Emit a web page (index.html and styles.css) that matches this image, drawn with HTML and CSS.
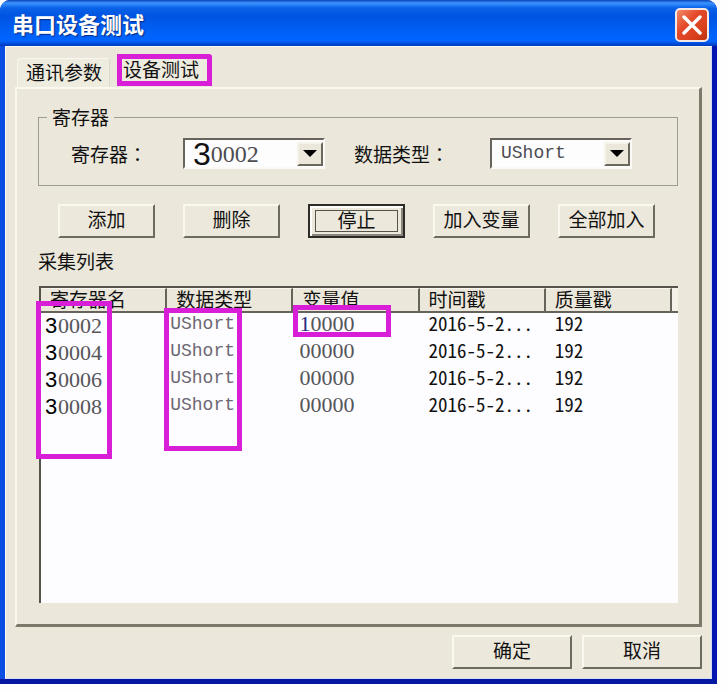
FILE: index.html
```html
<!DOCTYPE html>
<html lang="zh-CN">
<head>
  <meta charset="UTF-8" />
  <meta name="viewport" content="width=device-width, initial-scale=1.0"/>
  <title>串口设备测试</title>
  <link rel="stylesheet" href="styles.css">
</head>
<body>
  <div class="window">
    <div class="titlebar">
      <h1>串口设备测试</h1>
      <button class="close-btn" type="button" aria-label="关闭">
        <svg width="20" height="20" viewBox="0 0 20 20"><path d="M2 2 L18 18 M18 2 L2 18" stroke="#fff" stroke-width="3.4" stroke-linecap="round"/></svg>
      </button>
    </div>

    <div class="client">
      <div class="tabs">
        <button class="tab" type="button">通讯参数</button>
        <button class="tab active" type="button">设备测试</button>
      </div>

      <div class="panel">
        <fieldset class="group">
          <legend>寄存器</legend>
          <div class="fields">
            <label for="register">寄存器<span class="colon" lang="zh-TW">：</span></label>
            <div class="combo">
              <span class="prefix">3</span>
              <select id="register" class="register">
                <option>0002</option>
                <option>0004</option>
                <option>0006</option>
                <option>0008</option>
              </select>
              <span class="arrow"></span>
            </div>
            <label for="datatype">数据类型<span class="colon" lang="zh-TW">：</span></label>
            <div class="combo">
              <select id="datatype" class="datatype">
                <option>UShort</option>
              </select>
              <span class="arrow"></span>
            </div>
          </div>
        </fieldset>

        <div class="actions">
          <button class="btn" type="button">添加</button>
          <button class="btn" type="button">删除</button>
          <button class="btn default" type="button"><span>停止</span></button>
          <button class="btn" type="button">加入变量</button>
          <button class="btn" type="button">全部加入</button>
        </div>

        <div class="list-title">采集列表</div>
        <div class="list">
          <table>
            <thead>
              <tr>
                <th>寄存器名</th>
                <th>数据类型</th>
                <th>变量值</th>
                <th>时间戳</th>
                <th>质量戳</th>
                <td class="filler"></td>
              </tr>
            </thead>
            <tbody>
              <tr>
                <td class="reg"><b>3</b>0002</td>
                <td class="type">UShort</td>
                <td class="value"><i>1</i>0000</td>
                <td>2016-5-2...</td>
                <td>192</td>
              </tr>
              <tr>
                <td class="reg"><b>3</b>0004</td>
                <td class="type">UShort</td>
                <td class="value">00000</td>
                <td>2016-5-2...</td>
                <td>192</td>
              </tr>
              <tr>
                <td class="reg"><b>3</b>0006</td>
                <td class="type">UShort</td>
                <td class="value">00000</td>
                <td>2016-5-2...</td>
                <td>192</td>
              </tr>
              <tr>
                <td class="reg"><b>3</b>0008</td>
                <td class="type">UShort</td>
                <td class="value">00000</td>
                <td>2016-5-2...</td>
                <td>192</td>
              </tr>
            </tbody>
          </table>
          <!-- highlight frames -->
          <div class="mark mark-reg"></div>
          <div class="mark mark-type"></div>
          <div class="mark mark-value"></div>
        </div>
      </div>

      <div class="footer">
        <button class="btn" type="button">确定</button>
        <button class="btn" type="button">取消</button>
      </div>
    </div>
  </div>
</body>
</html>
```
FILE: styles.css
```css
* { box-sizing: border-box; }
body {
  margin: 0;
  background: #fefefe;
  color: #111;
  font-family: "Noto Sans CJK SC", sans-serif;
  font-size: 19px;
  line-height: 24px;
}
button, select {
  font: inherit;
  color: inherit;
}
.window {
  margin-right: 11px;
  background: linear-gradient(90deg, #0a4ee4 6px, #0414b0 6px);
  border-radius: 10px 10px 0 0;
  overflow: hidden;
}
.window::after {
  content: "";
  display: block;
  height: 5px;
  background: #0418a4;
}

/* title bar */
.titlebar {
  display: flex;
  align-items: center;
  justify-content: space-between;
  height: 46px;
  padding: 0 8px 0 12px;
  background: linear-gradient(#0a44b8 0, #3c93ff 3px, #0a62e8 8px, #0054e0 16px, #0062fa 34px, #0064ff 41px, #0038b8 46px);
}
.titlebar h1 {
  margin: 0;
  color: white;
  font-size: 22px;
  font-weight: 700;
  text-shadow: 1px 1px 1px #0a2a80;
}
.close-btn {
  display: flex;
  align-items: center;
  justify-content: center;
  width: 34px;
  height: 34px;
  margin-top: 3px;
  padding: 0;
  border: 2px solid #f6e8e4;
  border-radius: 5px;
  background: linear-gradient(135deg, #f08a68, #e4492a 40%, #d8401c 75%, #b83010);
}

.client {
  margin: 0 5px;
  padding: 10px 9px 9px;
  background: #ebe7da;
  border: 1px solid #fbfaf4;
  border-bottom-color: #cfdcf4;
  border-right-color: #cfd8f4;
}

/* tabs */
.tabs {
  display: flex;
  align-items: flex-end;
  height: 30px;
}
.tab {
  height: 29px;
  margin-left: 2px;
  padding: 0 7px 3px 8px;
  border: 1px solid #f8f6ee;
  border-right-color: #dedacb;
  border-bottom: 0;
  border-radius: 4px 4px 0 0;
  background: #eeebdf;
}
.tab.active {
  height: 32px;
  margin: 0 0 1px 7px;
  padding: 0 8px 3px 1px;
  border: 5px solid #d81ed6;
  border-radius: 0 3px 0 0;
  line-height: 20px;
}
.panel {
  padding: 16px 21px 21px;
  border: 2px solid #faf8f0;
  border-right: 3px solid #7c796b;
  border-bottom: 3px solid #7c796b;
}

/* group box */
.group {
  min-width: 0;
  margin: 0;
  padding: 9px 0 16px 32px;
  border: 1px solid #9c9d8e;
}
.group legend {
  margin-left: -24px;
  padding: 0 5px;
}
.fields {
  display: flex;
  align-items: center;
}
.fields label { width: 112px; }
.colon { font-family: "Noto Sans CJK TC", sans-serif; }
.combo + label {
  width: 136px;
  margin-left: 29px;
}
.combo {
  position: relative;
  display: flex;
  align-items: center;
  width: 142px;
  height: 31px;
  background: #fefdfe;
  border: 2px solid #fbfaf6;
  border-top: 2px solid #66645c;
  border-left: 2px solid #66645c;
}
.combo select {
  flex: 1;
  min-width: 0;
  height: 27px;
  padding: 0;
  border: 0;
  outline: 0;
  appearance: none;
  background: transparent;
  color: #4c4c52;
}
.prefix {
  margin-left: 8px;
  font-family: "Liberation Sans", sans-serif;
  font-size: 32px;
}
.combo .register {
  font-family: "Liberation Serif", serif;
  font-size: 24px;
}
.combo .datatype {
  padding: 0 0 2px 9px;
  font-family: "Liberation Mono", monospace;
  font-size: 18px;
}
.arrow {
  position: absolute;
  top: 2px;
  right: 0;
  width: 26px;
  height: 24px;
  border: 2px solid #f6f3ea;
  border-right-color: #6b695e;
  border-bottom-color: #6b695e;
  background: #ebe7da;
  pointer-events: none;
}
.arrow::after {
  content: "";
  position: absolute;
  top: 6px;
  left: 4px;
  border: 7px solid transparent;
  border-top-color: #000;
  border-bottom: 0;
}

/* buttons */
.btn {
  width: 97px;
  height: 34px;
  padding: 0 0 4px;
  border: 2px solid #faf8ef;
  border-right: 2px solid #6d6b5f;
  border-bottom: 2px solid #6d6b5f;
  background: #ece8db;
}
.btn.default {
  padding: 2px;
  border: 2px solid #2c2b28;
  box-shadow: inset 2px 2px #fdfcf6, inset -2px -2px #8a887c;
}
.btn.default span {
  display: block;
  height: 22px;
  margin: 2px 3px;
  border: 1px solid #55534a;
  line-height: 18px;
}
.actions {
  display: flex;
  gap: 28px;
  padding: 18px 20px 0;
}
.list-title { padding: 11px 0 13px; }

/* data list */
.list {
  position: relative;
  height: 317px;
  margin-left: 1px;
  background: #fdfcfe;
  border-top: 2px solid #55534c;
  border-left: 2px solid #55534c;
}
table {
  width: 100%;
  table-layout: fixed;
  border-collapse: separate;
  border-spacing: 0;
}
th {
  height: 25px;
  padding: 0 0 2px 9px;
  border-top: 1px solid #f8f6ee;
  border-right: 2px solid #66645a;
  border-bottom: 2px solid #66645a;
  background: #ebe7da;
  font-weight: 400;
  line-height: 20px;
  text-align: left;
}
.filler {
  width: 6px;
  padding: 0;
  border-bottom: 2px solid #66645a;
  background: #f4f1e8;
}
tbody td {
  height: 27px;
  padding: 1px 0 0 9px;
  line-height: 18px;
  white-space: nowrap;
  vertical-align: top;
  font-feature-settings: "hwid";
}
tbody .reg, tbody .value {
  color: #55555a;
  font-family: "Liberation Serif", serif;
  font-size: 22px;
}
tbody .reg { padding: 4px 0 0 4px; }
.reg b {
  display: inline-block;
  width: 13px;
  color: #000;
  font-family: "Liberation Sans", sans-serif;
  font-weight: 400;
}
tbody .value { padding: 2px 0 0 6px; }
.value i {
  color: #2a2a80;
  font-style: normal;
}
tbody .type {
  padding: 2px 0 0 3px;
  color: #6c6874;
  font-family: "Liberation Mono", monospace;
  font-size: 18px;
}
.mark {
  position: absolute;
  border: 5px solid #d81ed6;
}
.mark-reg { left: -5px; top: 13px; width: 76px; height: 158px; }
.mark-type { left: 123px; top: 20px; width: 78px; height: 143px; }
.mark-value { left: 252px; top: 17px; width: 98px; height: 32px; }

.footer {
  display: flex;
  justify-content: flex-end;
  gap: 10px;
  padding-top: 8px;
}
.footer .btn { width: 120px; }
```
